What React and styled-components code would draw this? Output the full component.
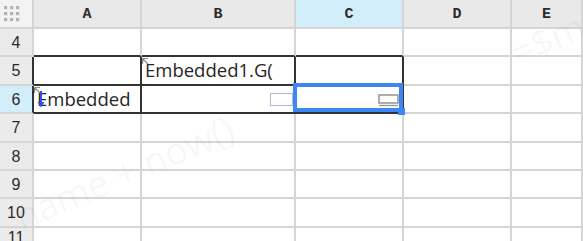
import React from 'react';
import styled, { createGlobalStyle } from 'styled-components';

const GRID = '#d5d5d5';
const INK = '#2b2b2b';
const BLUE = '#3b88f5';

const Global = createGlobalStyle`
    html, body {
        margin: 0;
        padding: 0;
        background: #fff;
    }
`;

const columns = ['A', 'B', 'C', 'D', 'E'];
const rows = [4, 5, 6, 7, 8, 9, 10, 11];

// cells that carry the black border box (A5:C6), plus the neighbours whose
// bottom/right edge forms the top/left of the box
const boxed = {
    '4A': { bottom: true }, '4B': { bottom: true }, '4C': { bottom: true },
    '5A': { right: true, bottom: true }, '5B': { right: true, bottom: true }, '5C': { right: true, bottom: true },
    '6A': { right: true, bottom: true }, '6B': { right: true, bottom: true }, '6C': { right: true, bottom: true },
};

const App = () => {
    return (
        <Sheet>
            <Global />
            <Corner><Dots /></Corner>
            {columns.map(col => (
                <ColHead key={col} $active={col === 'C'}>{col}</ColHead>
            ))}
            {rows.map(row => (
                <React.Fragment key={row}>
                    <RowHead $active={row === 6} $edge={row === 5 || row === 6}>{row}</RowHead>
                    {columns.map(col => {
                        const id = row + col;
                        const b = boxed[id] || {};
                        return (
                            <Cell key={id} $right={b.right} $bottom={b.bottom}>
                                {id === '5B' && (<><Marker /><CellText>Embedded1.G(</CellText></>)}
                                {id === '6A' && (<><Marker /><DownArrow /><CellText>Embedded</CellText></>)}
                                {id === '6B' && <FieldBox />}
                                {id === '6C' && (<><ComboIcon /><Selection><Handle /></Selection></>)}
                            </Cell>
                        );
                    })}
                </React.Fragment>
            ))}
            <Watermark $x={26} $y={190}>name + now()</Watermark>
            <Watermark $x={522} $y={26}>=$ma</Watermark>
        </Sheet>
    );
}

const Dots = () => (
    <svg width="16" height="16" viewBox="0 0 16 16">
        {[0, 6, 12].map(y => [0, 6, 12].map(x => (
            <rect key={x + '-' + y} x={x} y={y} width="3.2" height="3.2" fill="#b4b4b4" />
        )))}
    </svg>
);

const Marker = () => (
    <MarkerSvg width="7" height="7" viewBox="0 0 7 7">
        <path d="M0.5 0.5 L6 0.5 M0.5 0.5 L0.5 6 M0.5 0.5 L6 6" stroke="#8a8a8a" strokeWidth="1.2" fill="none" />
    </MarkerSvg>
);

const DownArrow = () => (
    <ArrowSvg width="8" height="17" viewBox="0 0 8 17">
        <path d="M4 0 L4 15" stroke="#2255ee" strokeWidth="2" />
        <path d="M0.5 11 L4 16.5 L7.5 11 Z" fill="#2255ee" />
    </ArrowSvg>
);

const ComboIcon = () => (
    <ComboSvg width="21" height="13" viewBox="0 0 21 13">
        <rect x="1" y="1" width="19" height="8" fill="#fff" stroke="#9a9a9a" strokeWidth="1.6" />
        <path d="M1 11.5 L20 11.5" stroke="#9a9a9a" strokeWidth="1.4" />
    </ComboSvg>
);

const Sheet = styled.div`
    position: relative;
    width: 583px;
    height: 241px;
    overflow: hidden;
    display: grid;
    grid-template-columns: 34px 108px 154px 108px 108px 1fr;
    grid-template-rows: 29px 28px 29px 28px 29px 28px 28px 29px 1fr;
    background: #fff;
`;

const Corner = styled.div`
    box-sizing: border-box;
    background: #f3f3f3;
    border-right: 2px solid ${GRID};
    border-bottom: 2px solid ${GRID};
    display: flex;
    align-items: center;
    padding: 1px 0 0 4px;
`;

const ColHead = styled.div`
    box-sizing: border-box;
    background: ${p => p.$active ? '#d2eefa' : '#e9e9e9'};
    border-right: 2px solid ${GRID};
    border-bottom: 2px solid ${GRID};
    display: flex;
    align-items: center;
    justify-content: center;
    font-family: "Liberation Mono", monospace;
    font-weight: bold;
    font-size: 15px;
    color: ${INK};
    padding-top: 2px;
`;

const RowHead = styled.div`
    box-sizing: border-box;
    background: ${p => p.$active ? '#d2eefa' : '#ebebeb'};
    border-right: 2px solid ${p => p.$edge ? '#333' : GRID};
    border-bottom: 2px solid ${GRID};
    display: flex;
    align-items: center;
    justify-content: center;
    font-family: "Liberation Sans", Arial, sans-serif;
    font-size: 16px;
    color: ${INK};
    padding-top: 1px;
`;

const Cell = styled.div`
    position: relative;
    box-sizing: border-box;
    border-right: 2px solid ${p => p.$right ? '#333' : GRID};
    border-bottom: 2px solid ${p => p.$bottom ? '#333' : GRID};
    display: flex;
    align-items: flex-start;
    padding-left: 3px;
`;

const CellText = styled.span`
    font-family: "Open Sans", "Noto Sans", sans-serif;
    font-size: 18.5px;
    line-height: 25px;
    color: #262626;
    white-space: nowrap;
`;

const MarkerSvg = styled.svg`
    position: absolute;
    left: 0;
    top: 1px;
`;

const ArrowSvg = styled.svg`
    position: absolute;
    left: 3px;
    top: 5px;
    z-index: 1;
`;

const FieldBox = styled.div`
    margin: 7px 1px 0 auto;
    width: 21px;
    height: 11px;
    border: 1px solid #a9b9d2;
    background: #fff;
`;

const ComboSvg = styled.svg`
    margin: 8px 3px 0 auto;
`;

const Selection = styled.div`
    position: absolute;
    top: -3px;
    left: -3px;
    right: -1px;
    bottom: 0;
    border: 4px solid ${BLUE};
    z-index: 2;
`;

const Handle = styled.div`
    position: absolute;
    right: -6px;
    bottom: -7px;
    width: 7px;
    height: 7px;
    background: ${BLUE};
`;

const Watermark = styled.span`
    position: absolute;
    left: ${p => p.$x}px;
    top: ${p => p.$y}px;
    transform: rotate(-23deg);
    transform-origin: left bottom;
    font-family: "Open Sans", sans-serif;
    font-size: 37px;
    color: rgba(0, 0, 0, 0.045);
    white-space: nowrap;
    pointer-events: none;
    z-index: 3;
`;

export default App;
